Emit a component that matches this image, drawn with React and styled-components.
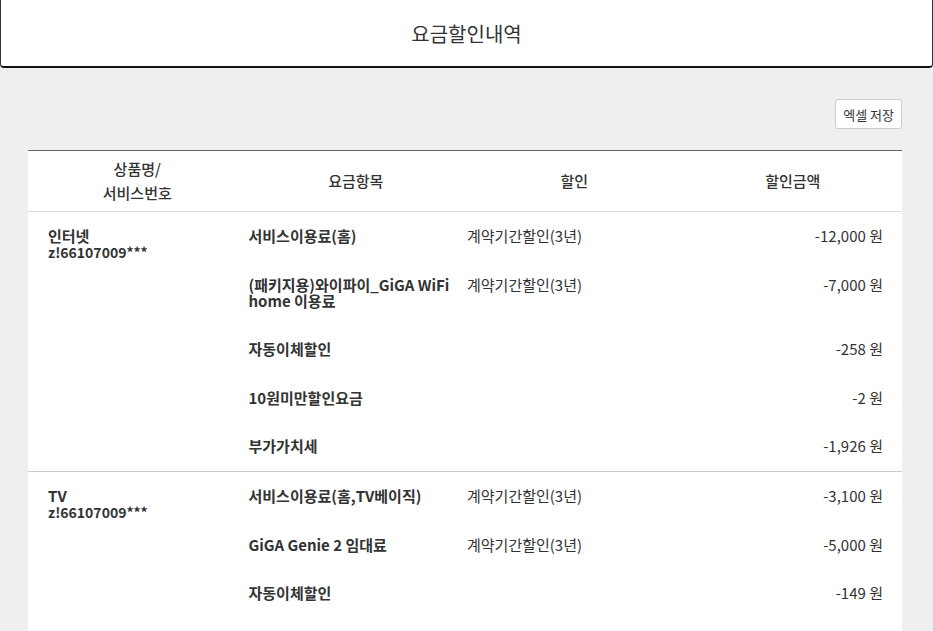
import React from 'react';
import styled, { createGlobalStyle } from 'styled-components';

const GlobalStyle = createGlobalStyle`
  html, body {
    margin: 0;
    padding: 0;
    background: #efefef;
  }
  body {
    font-family: "Noto Sans CJK KR", "Noto Sans", sans-serif;
    color: #333;
  }
`

const Page = styled.div`
  min-height: 631px;
  background: #efefef;
`

const Header = styled.header`
  height: 66px;
  background: #fff;
  border: 1px solid #333;
  border-top: none;
  border-bottom: 2px solid #111;
  border-radius: 0 0 4px 4px;
  display: flex;
  align-items: center;
  justify-content: center;
`

const Title = styled.h1`
  margin: 0;
  font-size: 20px;
  font-weight: 400;
  color: #333;
`

const Content = styled.div`
  padding: 31px 31px 0 28px;
`

const Toolbar = styled.div`
  display: flex;
  justify-content: flex-end;
  margin-bottom: 21px;
`

const Button = styled.button`
  height: 30px;
  padding: 0 7px;
  background: #fff;
  border: 1px solid #ccc;
  border-radius: 3px;
  font-family: inherit;
  font-size: 13px;
  color: #333;
`

const Table = styled.div`
  background: #fff;
  border-top: 1px solid #666;
`

const Columns = styled.div`
  display: grid;
  grid-template-columns: 25% 25% 25% 25%;
`

const HeadRow = styled(Columns)`
  height: 60px;
  border-bottom: 1px solid #ddd;
  align-items: center;
`

const HeadCell = styled.div`
  text-align: center;
  font-size: 15px;
  font-weight: 500;
  line-height: 24px;
  color: #333;
`

const Group = styled(Columns)`
  padding: 16px 0 17px;
  border-bottom: 1px solid #ccc;
  row-gap: 32.5px;
  align-items: start;
  font-size: 15px;
  line-height: 16px;
`

const Product = styled.div`
  grid-row: 1 / span ${p => p.span};
  padding-left: 20px;
  font-weight: 700;
  color: #333;
`

const Code = styled.span`
  font-size: 14px;
`

const Item = styled.div`
  padding-left: 2px;
  font-weight: 700;
  color: #333;
`

const Discount = styled.div`
  padding-left: 2px;
  font-weight: 400;
  color: #333;
`

const Amount = styled.div`
  padding-right: 19px;
  text-align: right;
  font-weight: 400;
  color: #333;
`

const groups = [
  {
    name: '인터넷',
    no: 'z!66107009***',
    items: [
      ['서비스이용료(홈)', '계약기간할인(3년)', '-12,000 원'],
      [<>(패키지용)와이파이_GiGA WiFi<br />home 이용료</>, '계약기간할인(3년)', '-7,000 원'],
      ['자동이체할인', '', '-258 원'],
      ['10원미만할인요금', '', '-2 원'],
      ['부가가치세', '', '-1,926 원'],
    ],
  },
  {
    name: 'TV',
    no: 'z!66107009***',
    items: [
      ['서비스이용료(홈,TV베이직)', '계약기간할인(3년)', '-3,100 원'],
      ['GiGA Genie 2 임대료', '계약기간할인(3년)', '-5,000 원'],
      ['자동이체할인', '', '-149 원'],
      ['10원미만할인요금', '', '-3 원'],
    ],
  },
];

export default function App() {
  return (
    <Page>
      <GlobalStyle />
      <Header>
        <Title>요금할인내역</Title>
      </Header>
      <Content>
        <Toolbar>
          <Button>엑셀 저장</Button>
        </Toolbar>
        <Table>
          <HeadRow>
            <HeadCell>상품명/<br />서비스번호</HeadCell>
            <HeadCell>요금항목</HeadCell>
            <HeadCell>할인</HeadCell>
            <HeadCell>할인금액</HeadCell>
          </HeadRow>
          {groups.map((g, i) => (
            <Group key={i}>
              <Product span={g.items.length}>
                {g.name}<br /><Code>{g.no}</Code>
              </Product>
              {g.items.map((it, j) => (
                <React.Fragment key={j}>
                  <Item>{it[0]}</Item>
                  <Discount>{it[1]}</Discount>
                  <Amount>{it[2]}</Amount>
                </React.Fragment>
              ))}
            </Group>
          ))}
        </Table>
      </Content>
    </Page>
  );
}
